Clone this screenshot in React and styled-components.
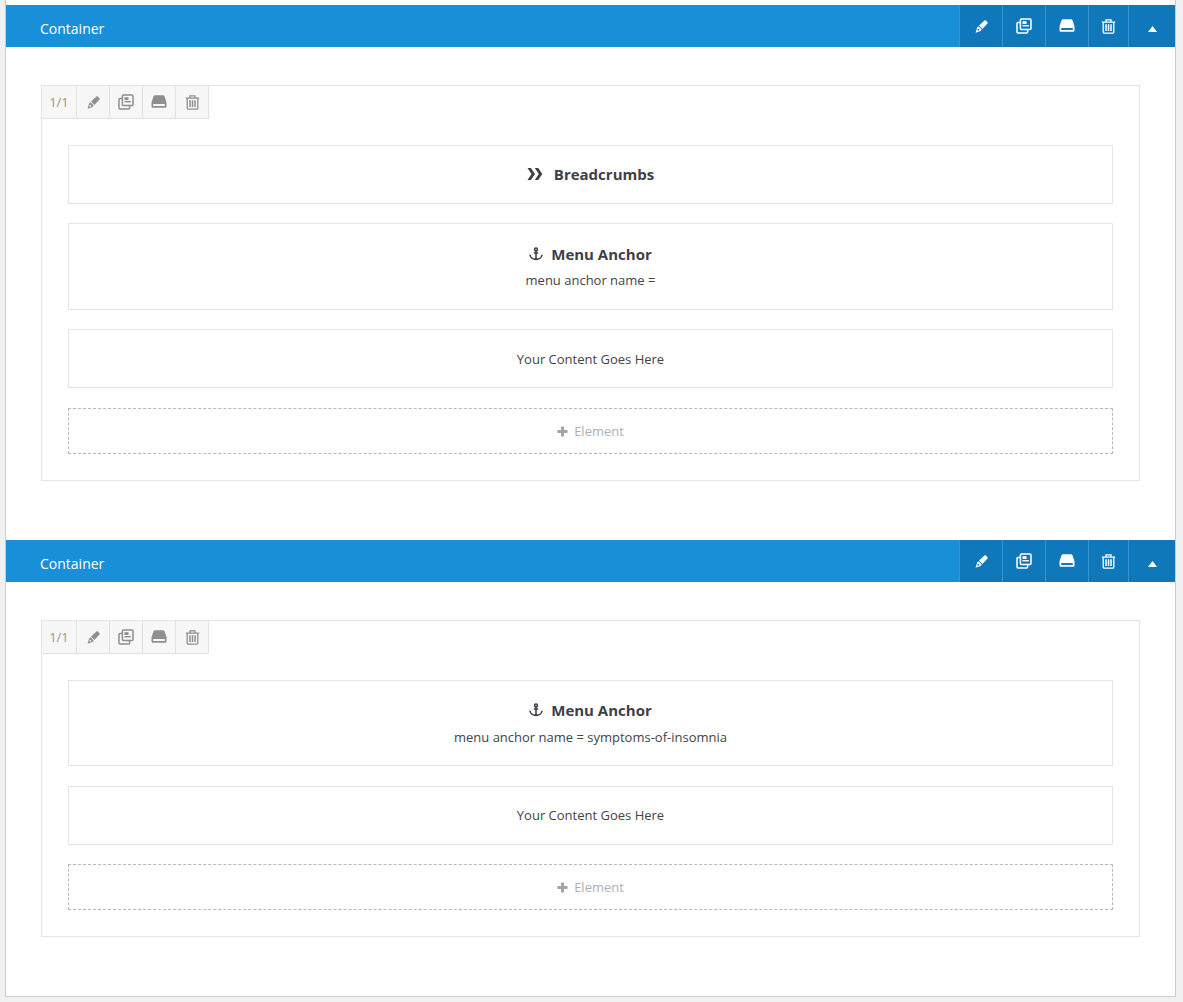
import React from "react";
import styled, { createGlobalStyle } from "styled-components";

const Global = createGlobalStyle`
  html, body {
    margin: 0;
    padding: 0;
    background: #f1f1f1;
    font-family: "Open Sans", "Liberation Sans", sans-serif;
  }
`;

const Panel = styled.div`
  box-sizing: border-box;
  width: 1171px;
  height: 997px;
  margin-left: 5px;
  padding-top: 5px;
  background: #fff;
  border: 1px solid #ccc;
  border-top: none;
  box-shadow: 0 1px 1px rgba(0, 0, 0, 0.04);
`;

const Section = styled.section`
  padding-bottom: 59px;
`;

const Header = styled.div`
  display: flex;
  align-items: stretch;
  height: 42px;
  background: #198fd9;
  color: #fff;
`;

const Title = styled.div`
  flex: 1;
  padding-left: 34px;
  font-size: 14px;
  line-height: 47px;
  height: 42px;
`;

const HeadButton = styled.div`
  display: flex;
  align-items: center;
  justify-content: center;
  width: ${(p) => p.$w || 43}px;
  box-sizing: border-box;
  background: #0e78bb;
  border-left: 1px solid #3d94cb;
  color: #fff;
`;

const Column = styled.div`
  margin: 38px 35px 0;
  border: 1px solid #e5e5e5;
`;

const Toolbar = styled.div`
  display: flex;
  width: fit-content;
  height: 32px;
  background: #f7f7f7;
  border-bottom: 1px solid #e1e1e1;
  border-right: 1px solid #e1e1e1;
`;

const ToolCell = styled.div`
  display: flex;
  align-items: center;
  justify-content: center;
  box-sizing: border-box;
  width: ${(p) => p.$w || 33}px;
  border-right: 1px solid #e1e1e1;
  font-size: 13px;
  color: #a8917c;
  svg {
    color: #8f8f8f;
  }
  &:last-child {
    border-right: none;
  }
`;

const Elements = styled.div`
  display: flex;
  flex-direction: column;
  padding: 26px;
`;

const Element = styled.div`
  box-sizing: border-box;
  height: ${(p) => p.$h}px;
  margin-bottom: ${(p) => p.$gap}px;
  border: 1px solid #e5e5e5;
  display: flex;
  flex-direction: column;
  align-items: center;
  padding-top: ${(p) => p.$top}px;
`;

const ElementTitle = styled.div`
  display: flex;
  align-items: center;
  gap: ${(p) => p.$gap}px;
  font-size: 15px;
  font-weight: 700;
  line-height: 20px;
  color: #3f3f46;
`;

const ElementText = styled.div`
  font-size: 13px;
  line-height: 18px;
  color: #444;
  margin-top: ${(p) => p.$mt || 0}px;
`;

const AddElement = styled.div`
  box-sizing: border-box;
  height: 46px;
  border: 1px dashed #b8b8b8;
  display: flex;
  align-items: center;
  justify-content: center;
  gap: 6px;
  font-size: 13px;
  color: #b0b0b0;
  svg {
    color: #a4a4a4;
  }
`;

const Caret = styled.svg`
  margin: 5px 0 0 1px;
`;

const Pen = () => (
  <svg width="13" height="13" viewBox="0 0 14 14" fill="currentColor">
    <path d="M10.2.6c.5-.4 1-.4 1.5 0l1.7 1.7c.4.5.4 1 0 1.5L8 9.6 4.4 6Z" />
    <path
      fillRule="evenodd"
      d="M3.7 6.7 7.3 10.3 6 11.8 .6 13.6 2.3 8.1Zm-.7 3a1 1 0 1 0 1.4 1.4A1 1 0 0 0 3 9.7Z"
    />
  </svg>
);

const Copy = () => (
  <svg width="16" height="16" viewBox="0 0 16 16" fill="none" stroke="currentColor" strokeWidth="1.5">
    <rect x="4.4" y="1" width="10.6" height="10.6" rx="1" />
    <path d="M4.4 4.4H2a1 1 0 0 0-1 1V14a1 1 0 0 0 1 1h8.6a1 1 0 0 0 1-1v-2.4" />
    <rect x="6.5" y="3.2" width="4" height="2.8" fill="currentColor" stroke="none" />
    <path d="M6.5 7.7h6.4" strokeWidth="1.4" />
  </svg>
);

const Drive = () => (
  <svg width="16" height="16" viewBox="0 0 16 16" fill="currentColor">
    <path
      fillRule="evenodd"
      d="M4 1.2h8c.7 0 1.2.4 1.5 1l1.8 5.6c.1.4.2.8.2 1.2v3.2c0 1-.7 1.6-1.6 1.6H2.1c-.9 0-1.6-.6-1.6-1.6V9c0-.4.1-.8.2-1.2L2.5 2.2c.3-.6.8-1 1.5-1ZM2.2 10v2h11.6v-2Z"
    />
  </svg>
);

const Trash = () => (
  <svg width="15" height="15" viewBox="0 0 15 15" fill="none" stroke="currentColor" strokeWidth="1.3">
    <path d="M.8 3.1h13.4M5 2.8V.9h5v1.9" />
    <path d="M2.2 3.2v9.7c0 .8.5 1.3 1.2 1.3h8.2c.7 0 1.2-.5 1.2-1.3V3.2" />
    <path d="M5 5.2v6.9M7.5 5.2v6.9M10 5.2v6.9" strokeWidth="1.5" />
  </svg>
);

const Triangle = () => (
  <Caret width="9" height="6" viewBox="0 0 9 6" fill="currentColor">
    <path d="M4.5 0 9 6H0Z" />
  </Caret>
);

const Chevrons = () => (
  <svg width="16" height="12" viewBox="0 0 16 12" fill="currentColor">
    <path d="M.5 0h3.4L8 6l-4.1 6H.5l4-6Z" />
    <path d="M7.8 0h3.4l4.1 6-4.1 6H7.8l4-6Z" />
  </svg>
);

const Anchor = () => (
  <svg width="14" height="14" viewBox="0 0 14 14" fill="none" stroke="currentColor" strokeWidth="1.6">
    <circle cx="7" cy="2.4" r="1.4" />
    <path d="M7 3.8v8.4M4.8 6h4.4" />
    <path d="M1 7.8c.2 2.8 3 4.6 6 4.6s5.8-1.8 6-4.6" />
  </svg>
);

const Plus = () => (
  <svg width="11" height="11" viewBox="0 0 11 11" fill="currentColor">
    <path d="M4 .5h3V4h3.5v3H7v3.5H4V7H.5V4H4Z" />
  </svg>
);

const ContainerHeader = () => (
  <Header>
    <Title>Container</Title>
    <HeadButton><Pen /></HeadButton>
    <HeadButton><Copy /></HeadButton>
    <HeadButton><Drive /></HeadButton>
    <HeadButton $w={40}><Trash /></HeadButton>
    <HeadButton $w={47}><Triangle /></HeadButton>
  </Header>
);

const ColumnTools = () => (
  <Toolbar>
    <ToolCell $w={35}>1/1</ToolCell>
    <ToolCell><Pen /></ToolCell>
    <ToolCell><Copy /></ToolCell>
    <ToolCell><Drive /></ToolCell>
    <ToolCell $w={32}><Trash /></ToolCell>
  </Toolbar>
);

const MenuAnchor = ({ name, h, gap, top, mt }) => (
  <Element $h={h} $gap={gap} $top={top}>
    <ElementTitle $gap={8}>
      <Anchor />
      Menu Anchor
    </ElementTitle>
    <ElementText $mt={mt}>menu anchor name = {name}</ElementText>
  </Element>
);

const Content = ({ gap, top }) => (
  <Element $h={59} $gap={gap} $top={top}>
    <ElementText>Your Content Goes Here</ElementText>
  </Element>
);

const Add = () => (
  <AddElement>
    <Plus />
    Element
  </AddElement>
);

export default function App() {
  return (
    <>
      <Global />
      <Panel>
        <Section>
          <ContainerHeader />
          <Column>
            <ColumnTools />
            <Elements>
              <Element $h={59} $gap={19} $top={18}>
                <ElementTitle $gap={11}>
                  <Chevrons />
                  Breadcrumbs
                </ElementTitle>
              </Element>
              <MenuAnchor h={87} gap={19} top={20} mt={7} />
              <Content gap={20} top={20} />
              <Add />
            </Elements>
          </Column>
        </Section>
        <Section>
          <ContainerHeader />
          <Column>
            <ColumnTools />
            <Elements>
              <MenuAnchor h={86} gap={20} top={19} mt={8} name="symptoms-of-insomnia" />
              <Content gap={19} top={19} />
              <Add />
            </Elements>
          </Column>
        </Section>
      </Panel>
    </>
  );
}
